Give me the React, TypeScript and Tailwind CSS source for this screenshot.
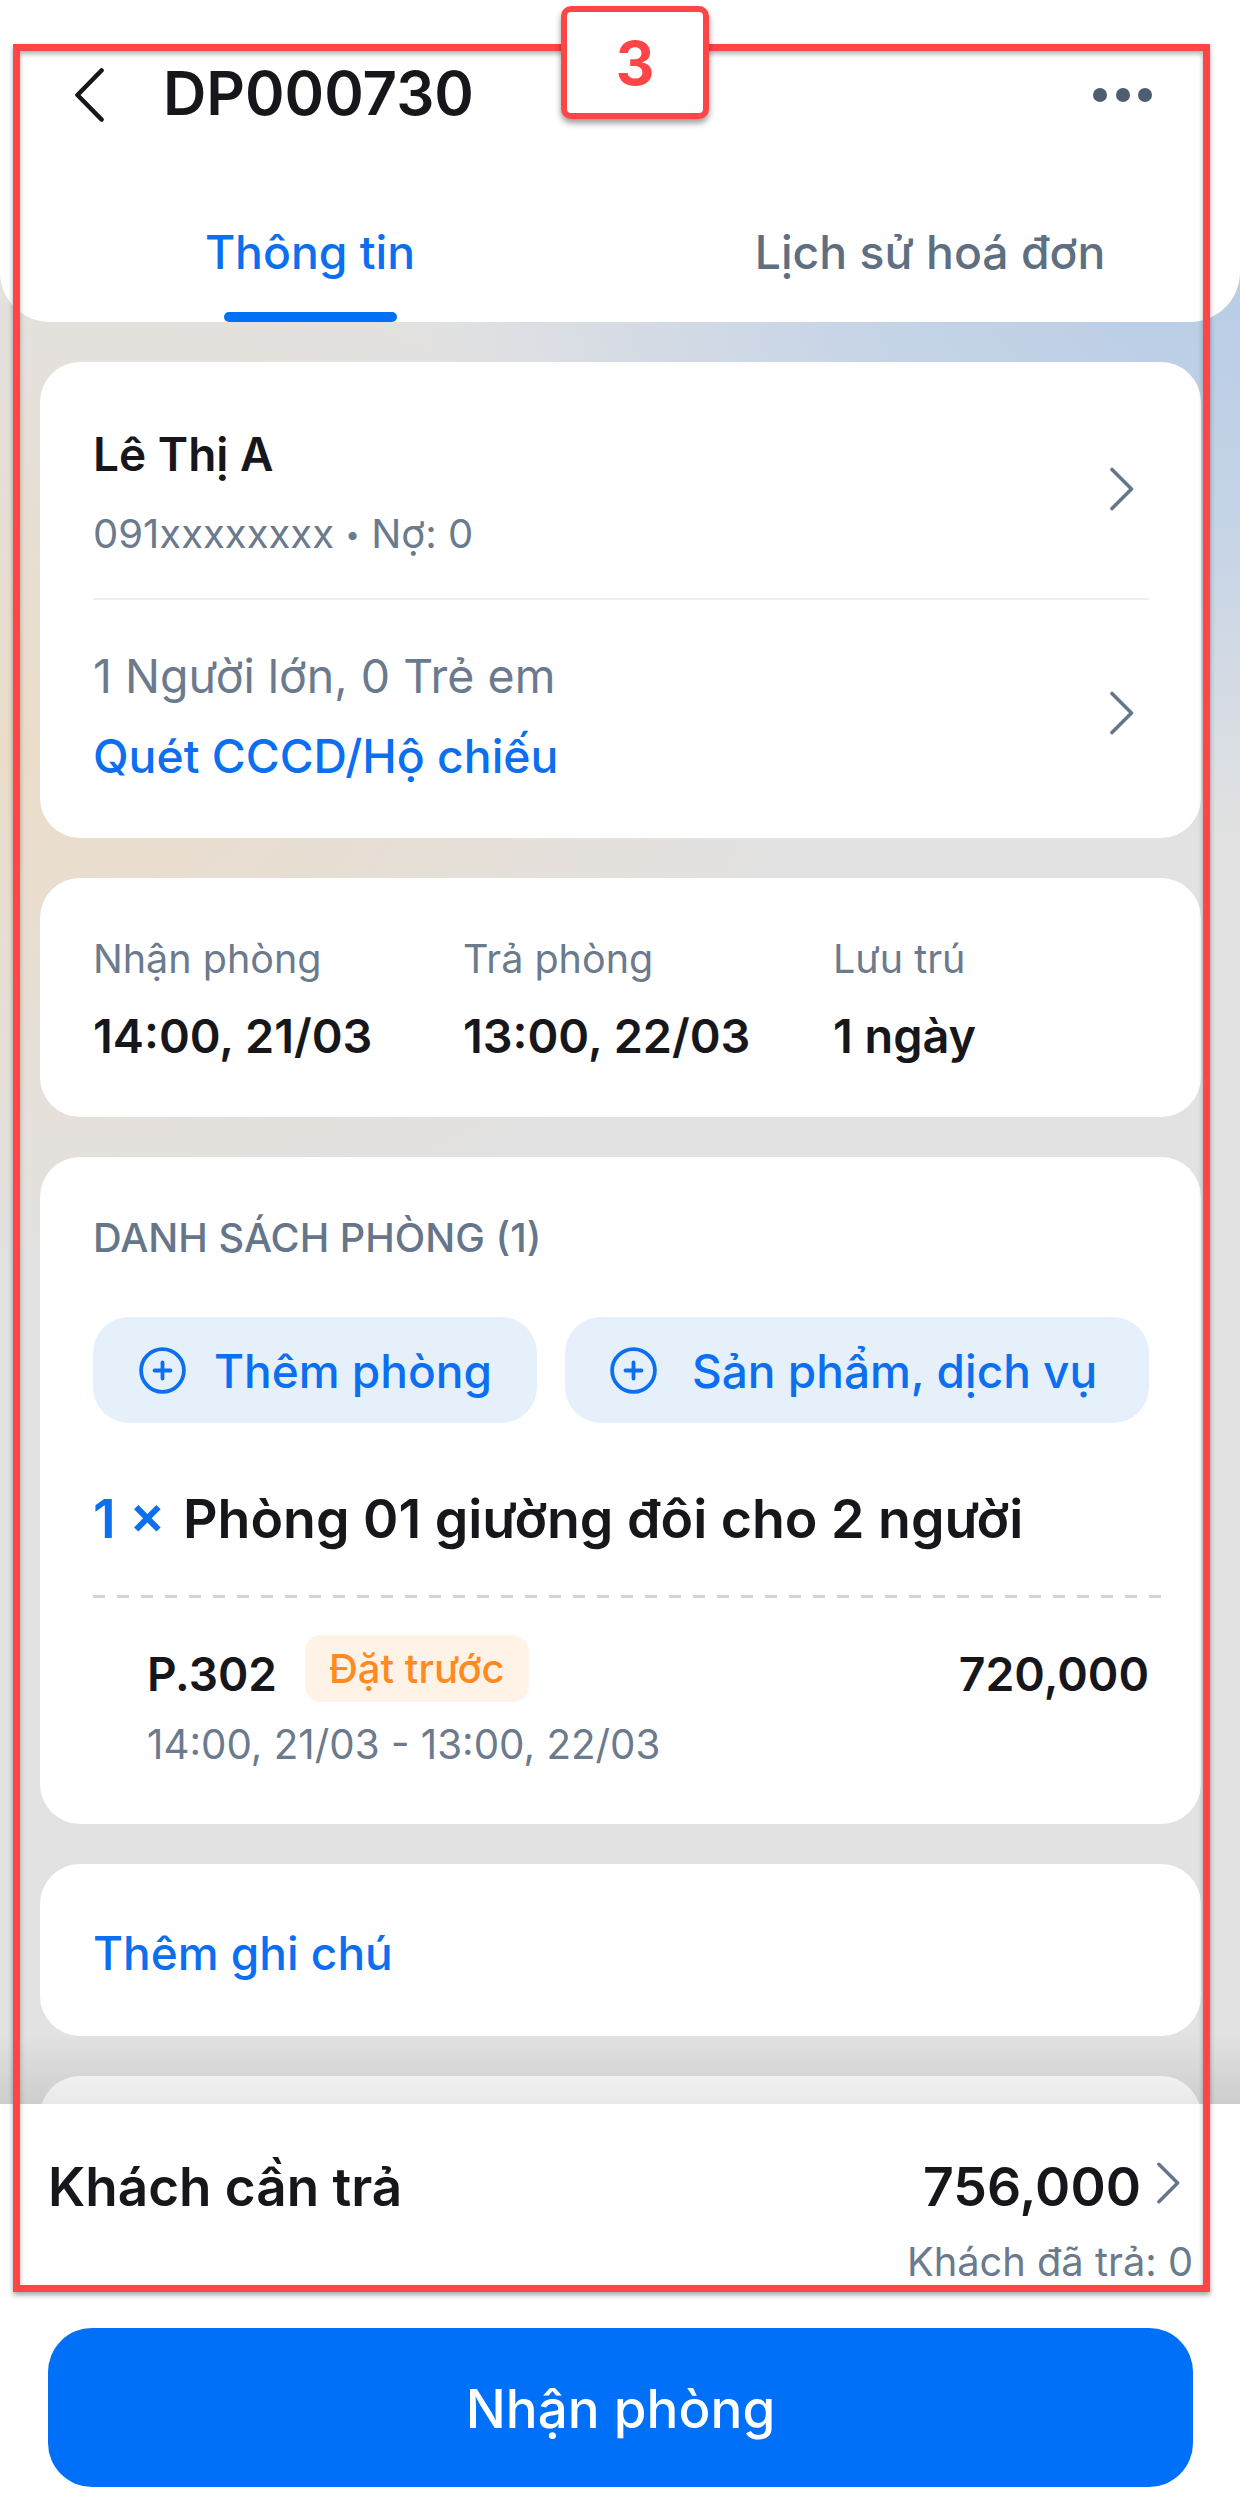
function Chevron({ className }: { className: string }) {
  return (
    <svg className={className} viewBox="0 0 25 44" fill="none" stroke="currentColor" strokeWidth={3.6} strokeLinecap="round" strokeLinejoin="round">
      <path d="M3 2.5 L22.5 22 L3 41.5" />
    </svg>
  );
}

function PlusCircle() {
  return (
    <svg className="h-[47px] w-[47px] shrink-0" viewBox="0 0 47 47" fill="none" stroke="#0b6ff0" strokeWidth={3.8} strokeLinecap="round">
      <circle cx="23.5" cy="23.5" r="21.4" />
      <path d="M23.5 15.5v16M15.5 23.5h16" />
    </svg>
  );
}

function Card({ className, children }: { className: string; children?: React.ReactNode }) {
  return <section className={`rounded-[40px] bg-white pl-[53px] pr-[52px] ${className}`}>{children}</section>;
}

const stay = [
  { label: 'Nhận phòng', value: '14:00, 21/03' },
  { label: 'Trả phòng', value: '13:00, 22/03' },
  { label: 'Lưu trú', value: '1 ngày' },
];

export default function App() {
  return (
    <div className="relative flex h-[2516px] w-[1240px] flex-col overflow-hidden bg-white font-['Inter',sans-serif] text-[#17171b]">
      <div className="relative flex-1 overflow-hidden bg-[#e2e2e2] bg-[radial-gradient(ellipse_820px_580px_at_100%_260px,#b7cce6_0%,rgba(190,208,232,0.8)_45%,rgba(226,226,226,0)_100%),radial-gradient(ellipse_800px_520px_at_0%_750px,#ebdcc9_0%,rgba(235,220,201,0.55)_50%,rgba(226,226,226,0)_100%)]">
        <header className="h-[322px] rounded-b-[50px] bg-white pt-[58px]">
          <div className="flex h-[70px] items-center justify-between pl-[75px] pr-[88px]">
            <div className="flex items-center">
              <svg className="mt-[4px] h-[54px] w-[29px]" viewBox="0 0 29 54" fill="none" stroke="#17171b" strokeWidth={4.6} strokeLinecap="round" strokeLinejoin="round">
                <path d="M26.5 2.5 L2.5 27 L26.5 51.5" />
              </svg>
              <h1 className="ml-[59px] text-[60px] font-semibold leading-[70px]">DP000730</h1>
            </div>
            <div className="mt-[3px] flex gap-[8.5px]">
              <span className="h-[14px] w-[14px] rounded-full bg-[#4f5d70]" />
              <span className="h-[14px] w-[14px] rounded-full bg-[#4f5d70]" />
              <span className="h-[14px] w-[14px] rounded-full bg-[#4f5d70]" />
            </div>
          </div>
          <div className="mt-[94px] grid grid-cols-2">
            <div className="flex flex-col items-center">
              <span className="text-[46.3px] font-medium leading-[60px] text-[#0b6ff0]">Thông tin</span>
              <span className="mt-[30px] h-[10px] w-[173px] rounded-full bg-[#0070f4]" />
            </div>
            <div className="flex flex-col items-center">
              <span className="text-[46.3px] font-medium leading-[60px] text-[#5f6f82]">Lịch sử hoá đơn</span>
            </div>
          </div>
        </header>

        <div className="flex flex-col gap-[40px] pl-[40px] pr-[39px] pt-[40px]">
          <Card className="h-[476px]">
            <div className="flex h-[238px] items-center justify-between border-b-2 border-[#eceef0] pt-[26px]">
              <div>
                <p className="text-[46px] font-semibold leading-[56px]">Lê Thị A</p>
                <p className="mt-[27px] text-[40px] leading-[50px] text-[#6b7a8c]">
                  091xxxxxxxx <span className="align-[4px] text-[26px]">•</span> Nợ: 0
                </p>
              </div>
              <Chevron className="-mt-[8px] mr-[15px] h-[44px] w-[25px] text-[#66768a]" />
            </div>
            <div className="flex items-center justify-between pt-[48px]">
              <div>
                <p className="text-[46.5px] leading-[56px] text-[#6b7a8c]">1 Người lớn, 0 Trẻ em</p>
                <p className="mt-[24px] text-[46.3px] font-medium leading-[56px] text-[#0b6ff0]">Quét CCCD/Hộ chiếu</p>
              </div>
              <Chevron className="-mt-[6px] mr-[15px] h-[44px] w-[25px] text-[#66768a]" />
            </div>
          </Card>

          <Card className="grid h-[239px] grid-cols-[370px_370px_1fr] pt-[56px]">
            {stay.map((item) => (
              <div key={item.label}>
                <p className="text-[39.5px] leading-[50px] text-[#6b7a8c]">{item.label}</p>
                <p className="mt-[23px] text-[46.8px] font-semibold leading-[58px]">{item.value}</p>
              </div>
            ))}
          </Card>

          <Card className="h-[667px] pt-[57px]">
            <p className="text-[39.7px] font-medium leading-[48px] text-[#66768a]">DANH SÁCH PHÒNG (1)</p>
            <div className="mt-[55px] flex gap-[28px]">
              <button className="flex h-[106px] w-[444px] items-center gap-[28px] rounded-[36px] bg-[#e5f0fb] pl-[46px] text-[46px] font-medium text-[#0b6ff0]">
                <PlusCircle />
                <span className="pt-[2px]">Thêm phòng</span>
              </button>
              <button className="flex h-[106px] flex-1 items-center gap-[35px] rounded-[36px] bg-[#e5f0fb] pl-[45px] text-[46px] font-medium text-[#0b6ff0]">
                <PlusCircle />
                <span className="pt-[2px]">Sản phẩm, dịch vụ</span>
              </button>
            </div>
            <p className="mt-[64px] text-[53.7px] font-semibold leading-[64px]">
              <span className="mr-[4px] text-[#0b6ff0]">1 × </span>Phòng 01 giường đôi cho 2 người
            </p>
            <div className="-mr-[12px] mt-[44px] h-[3px] bg-[repeating-linear-gradient(to_right,#d5d5d5_0,#d5d5d5_12px,transparent_12px,transparent_24px)]" />
            <div className="mt-[37px] pl-[54px]">
              <div className="flex items-start">
                <span className="pt-[6px] text-[46px] font-semibold leading-[67px]">P.302</span>
                <span className="ml-[28px] h-[67px] rounded-[16px] bg-[#fff3e8] px-[24px] text-[40px] font-medium leading-[67px] text-[#ff8a1f]">Đặt trước</span>
                <span className="ml-auto pt-[6px] text-[46.4px] font-semibold leading-[67px]">720,000</span>
              </div>
              <p className="mt-[12px] text-[40.3px] leading-[50px] text-[#6b7a8c]">14:00, 21/03 - 13:00, 22/03</p>
            </div>
          </Card>

          <Card className="h-[172px] pt-[61px]">
            <p className="text-[46px] font-medium leading-[56px] text-[#0b6ff0]">Thêm ghi chú</p>
          </Card>

          <Card className="h-[120px]" />
        </div>

        <div className="absolute inset-x-0 bottom-0 h-[70px] bg-gradient-to-b from-black/0 to-black/9" />
      </div>

      <footer className="h-[412px] bg-white pl-[48px] pr-[47px] pt-[51px]">
        <div className="flex items-start justify-between">
          <span className="text-[53px] font-semibold leading-[64px]">Khách cần trả</span>
          <span className="flex items-start">
            <span className="text-[53.5px] font-semibold leading-[64px]">756,000</span>
            <Chevron className="ml-[15px] mr-[13px] mt-[6px] h-[44px] w-[24px] text-[#66768a]" />
          </span>
        </div>
        <p className="mt-[18px] text-right text-[39.8px] leading-[50px] text-[#6b7a8c]">Khách đã trả: 0</p>
        <button className="mt-[41px] h-[159px] w-full rounded-[44px] bg-[#0070f9] pt-[5px] text-[53px] font-medium text-white">Nhận phòng</button>
      </footer>

      <div className="absolute left-[13px] top-[44px] h-[2248px] w-[1197px] border-[7px] border-[#ff4545] shadow-[0_3px_5px_rgba(0,0,0,0.35),inset_0_3px_5px_rgba(0,0,0,0.3)]" />
      <div className="absolute left-[561px] top-[6px] flex h-[113px] w-[148px] items-center justify-center rounded-[10px] border-[6px] border-[#ff4545] bg-white text-[60px] font-bold text-[#ff4545] shadow-[0_4px_6px_rgba(0,0,0,0.4)]">3</div>
    </div>
  );
}
